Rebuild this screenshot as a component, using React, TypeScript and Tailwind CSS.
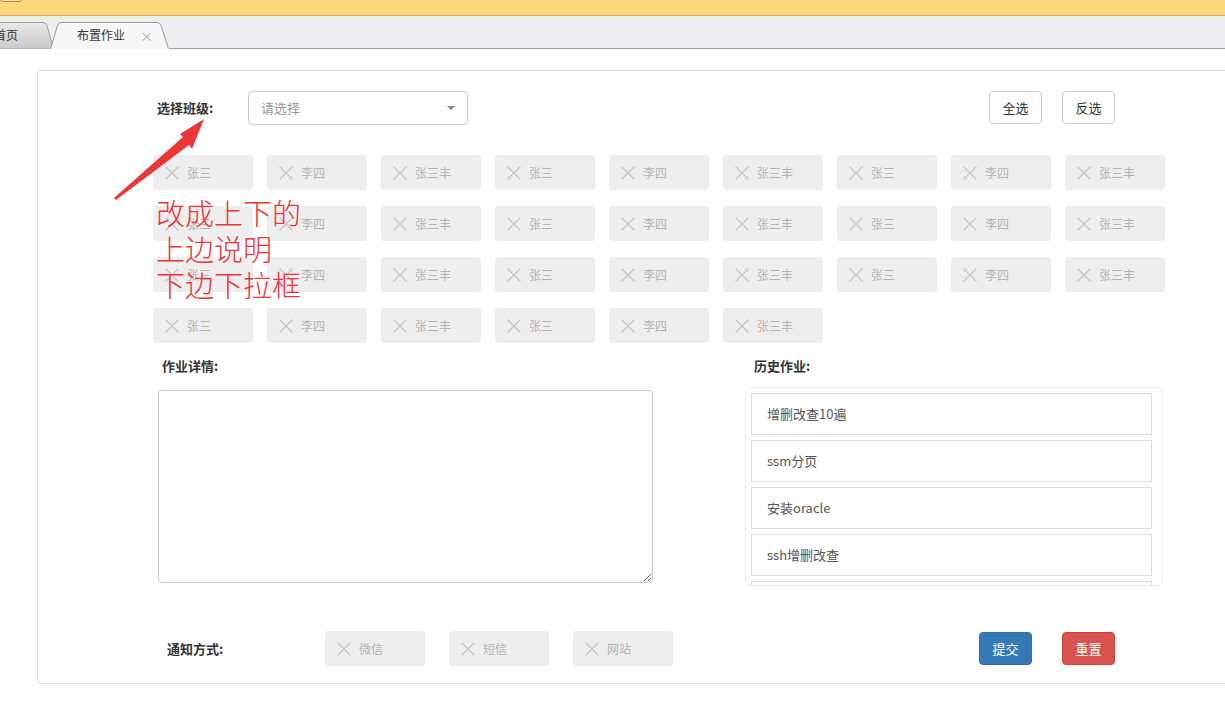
const font = { fontFamily: '"Microsoft YaHei", "Noto Sans CJK SC", "Noto Sans", sans-serif' };

function Chip({ label }: { label: string }) {
  return (
    <div className="w-[100px] h-[35px] bg-[#eeeeee] rounded-[3px] flex items-center pl-[12px] gap-[8px]">
      <svg width="14" height="14" viewBox="0 0 14 14" className="shrink-0">
        <path d="M1 1 L13 13 M13 1 L1 13" stroke="#c6c6c6" strokeWidth="1.4" strokeLinecap="round" />
      </svg>
      <span className="text-[12px] text-[#b3b3b3]">{label}</span>
    </div>
  );
}

export default function App() {
  const names = ['张三', '李四', '张三丰'];
  const students: string[] = [];
  for (let i = 0; i < 33; i++) students.push(names[i % 3]);

  const history = ['增删改查10遍', 'ssm分页', '安装oracle', 'ssh增删改查', ''];

  return (
    <div className="relative w-[1225px] h-[720px] overflow-hidden bg-white text-[#333]" style={font}>
      {/* top bar */}
      <div className="relative h-[16px] bg-[#ffd87c] border-b border-[#d8ae5a]">
        <div className="absolute -top-[10px] left-0 w-[22px] h-[12px] rounded-[3px] border border-[#a88a4a] bg-[#fde3a0]"></div>
      </div>

      {/* tab bar */}
      <div className="h-[33px] bg-[#eeeef0] border-b border-[#9c9c9c] flex items-end">
        <div className="relative -ml-[12px] w-[66px] h-[26px] flex items-center">
          <svg className="absolute inset-0" width="66" height="27" viewBox="0 0 66 27">
            <defs>
              <linearGradient id="g1" x1="0" y1="0" x2="0" y2="1">
                <stop offset="0" stopColor="#e9e9e9" />
                <stop offset="1" stopColor="#c9c9c9" />
              </linearGradient>
            </defs>
            <path d="M0.5 27 L0.5 3 Q0.5 0.5 3 0.5 L55 0.5 Q58 0.5 59 3.5 L65.5 27 Z" fill="url(#g1)" stroke="#a0a0a0" />
          </svg>
          <span className="relative ml-[6px] text-[12px] text-[#333]">首页</span>
        </div>
        <div className="relative -ml-[4px] w-[120px] h-[26px] flex items-center">
          <svg className="absolute inset-0" width="120" height="27" viewBox="0 0 120 27">
            <path d="M0.5 27 L7.5 3.5 Q8.5 0.5 11.5 0.5 L107 0.5 Q110 0.5 111 3.5 L118.5 27" fill="#f7f7f7" stroke="#999" />
            <rect x="1" y="26" width="118" height="2" fill="#f7f7f7" />
          </svg>
          <span className="relative ml-[27px] text-[12px] text-[#333]">布置作业</span>
          <span className="relative ml-[15px] text-[13px] text-[#aaa] leading-none">×</span>
        </div>
      </div>

      {/* panel */}
      <div className="ml-[37px] mt-[21px] w-[1210px] h-[614px] border border-[#dddddd] rounded-[4px] pl-[115px]">
        <div className="w-[1011px]">
          {/* row 1 */}
          <div className="mt-[20px] h-[33px] flex items-center">
            <div className="ml-[4px] w-[91px] text-[13px] font-bold text-[#333]">选择班级:</div>
            <div className="w-[220px] h-[34px] border border-[#cccccc] rounded-[4px] flex items-center pl-[12px] pr-[12px]">
              <span className="text-[13px] text-[#999]">请选择</span>
              <span className="ml-auto w-0 h-0 border-l-[4px] border-r-[4px] border-t-[4px] border-l-transparent border-r-transparent border-t-[#888]"></span>
            </div>
            <div className="ml-auto mr-[49px] flex gap-[20px]">
              <button className="w-[53px] h-[33px] bg-white border border-[#cccccc] rounded-[4px] text-[13px] text-[#333]">全选</button>
              <button className="w-[53px] h-[33px] bg-white border border-[#cccccc] rounded-[4px] text-[13px] text-[#333]">反选</button>
            </div>
          </div>

          {/* students */}
          <div className="mt-[31px] grid grid-cols-[repeat(9,100px)] gap-x-[14px] gap-y-[16px]">
            {students.map((s, i) => (
              <Chip key={i} label={s} />
            ))}
          </div>

          {/* details + history */}
          <div className="mt-[13px] flex">
            <div className="ml-[5px] w-[495px]">
              <div className="h-[20px] pl-[4px] text-[13px] font-bold leading-[20px]">作业详情:</div>
              <textarea className="mt-[14px] block w-[495px] h-[193px] border border-[#cccccc] rounded-[4px] resize-y outline-none" />
            </div>
            <div className="ml-[92px] w-[418px]">
              <div className="h-[20px] pl-[9px] text-[13px] font-bold leading-[20px]">历史作业:</div>
              <div className="mt-[11px] h-[199px] border border-[#eeeeee] rounded-[6px] p-[5px] overflow-hidden">
                {history.map((h, i) => (
                  <div key={i} className="w-[401px] h-[42px] mb-[5px] border border-[#dddddd] flex items-center pl-[15px] text-[13px] text-[#555]">
                    {h}
                  </div>
                ))}
              </div>
            </div>
          </div>

          {/* bottom row */}
          <div className="mt-[45px] h-[35px] flex items-center">
            <div className="ml-[14px] w-[158px] text-[13px] font-bold">通知方式:</div>
            <div className="flex gap-[24px]">
              <Chip label="微信" />
              <Chip label="短信" />
              <Chip label="网站" />
            </div>
            <div className="ml-auto mr-[49px] flex gap-[30px]">
              <button className="w-[53px] h-[33px] bg-[#337ab7] border border-[#2e6da4] rounded-[4px] text-[13px] text-white">提交</button>
              <button className="w-[53px] h-[33px] bg-[#d9534f] border border-[#d43f3a] rounded-[4px] text-[13px] text-white">重置</button>
            </div>
          </div>
        </div>
      </div>

      {/* red annotation */}
      <svg className="absolute left-0 top-0 pointer-events-none" width="260" height="220" viewBox="0 0 260 220">
        <polygon points="114,198 183,137 180,134 204,119 192,149 189,145 116,200" fill="#ee3636" />
      </svg>
      <div className="absolute left-[156px] top-[194px] text-[29px] leading-[36px] font-light text-[#ee3438] pointer-events-none" style={font}>
        <div>改成上下的</div>
        <div>上边说明</div>
        <div>下边下拉框</div>
      </div>
    </div>
  );
}
